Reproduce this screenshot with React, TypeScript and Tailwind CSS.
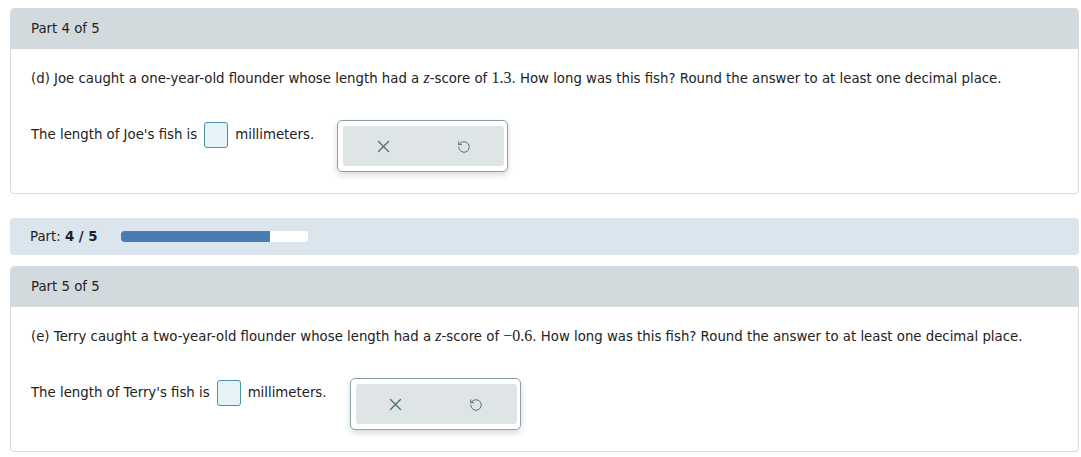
import React from "react";
import { RotateCcw } from "lucide-react";

const XIcon = () => (
  <svg width="13" height="13" viewBox="0 0 13 13" fill="none" stroke="#4d6b75" strokeWidth="1.3" strokeLinecap="round">
    <path d="M1.5 1.5 L11.5 11.5 M11.5 1.5 L1.5 11.5" />
  </svg>
);

const M = ({ children }: { children: React.ReactNode }) => (
  <span className="text-[16px]" style={{ fontFamily: '"Liberation Serif", serif' }}>{children}</span>
);

function PartCard({
  title,
  question,
  answerLabel,
  mt,
}: {
  title: string;
  question: React.ReactNode;
  answerLabel: string;
  mt: string;
}) {
  return (
    <div className={`ml-[10px] mr-[2px] ${mt} border border-[#d6dcdf] rounded-[4px] overflow-hidden bg-white`}>
      <div className="h-[40px] bg-[#d3dadd] px-[20px] flex items-center text-[13.3px] text-[#222]">{title}</div>
      <div className="px-[20px] pt-[19px] pb-[21px]">
        <div className="text-[13.3px] leading-[20px] text-[#222]">{question}</div>
        <div className="flex items-start mt-[31px]">
          <div className="flex items-center h-[26px] mt-[2px] text-[13.3px] text-[#222]">
            <span>{answerLabel}</span>
            <span className="inline-block w-[24px] h-[26px] mx-[7px] border border-[#4a93a6] rounded-[3px] bg-[#e5f3f8]" />
            <span>millimeters.</span>
          </div>
          <div className="ml-[23px] w-[171px] h-[52px] border border-[#8aa1aa] rounded-[5px] bg-white p-[5px] pr-[3px] shadow-[0_3px_6px_rgba(0,0,0,0.15)]">
            <div className="flex h-full bg-[#dfe5e7] rounded-[3px]">
              <div className="flex-1 flex items-center justify-center pt-[1px]">
                <XIcon />
              </div>
              <div className="flex-1 flex items-center justify-center pt-[1px]">
                <RotateCcw size={14} strokeWidth={1.6} color="#4d6b75" />
              </div>
            </div>
          </div>
        </div>
      </div>
    </div>
  );
}

export default function App() {
  return (
    <div className="w-[1081px] h-[457px] bg-white" style={{ fontFamily: '"DejaVu Sans", Verdana, sans-serif' }}>
      <div className="pt-[8px]">
        <PartCard
          mt="mt-0"
          title="Part 4 of 5"
          question={
            <>
              (d) Joe caught a one-year-old flounder whose length had a <M><i>z</i></M>-score of <M>1.3</M>. How long was this fish? Round the answer to at least one decimal place.
            </>
          }
          answerLabel="The length of Joe's fish is"
        />
        <div className="ml-[10px] mr-[2px] mt-[24px] h-[37px] bg-[#dae5ee] rounded-[4px] flex items-center px-[20px] text-[13.3px] text-[#222]">
          <span>Part: <b className="font-bold">4 / 5</b></span>
          <div className="ml-[23px] w-[187px] h-[11px] bg-white rounded-[3px] overflow-hidden">
            <div className="h-full bg-[#497cb4] rounded-l-[3px]" style={{ width: "80%" }} />
          </div>
        </div>
        <PartCard
          mt="mt-[11px]"
          title="Part 5 of 5"
          question={
            <>
              (e) Terry caught a two-year-old flounder whose length had a <M><i>z</i></M>-score of <M>−0.6</M>. How long was this fish? Round the answer to at least one decimal place.
            </>
          }
          answerLabel="The length of Terry's fish is"
        />
      </div>
    </div>
  );
}
